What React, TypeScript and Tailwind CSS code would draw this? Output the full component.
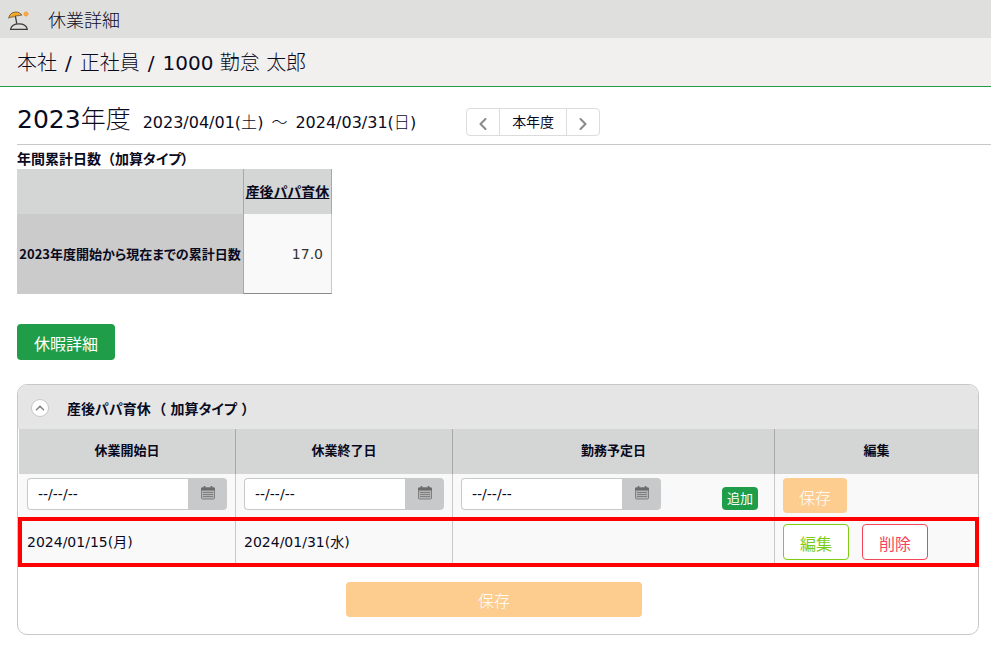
import { useState } from "react";
import { ChevronLeft, ChevronRight, ChevronUp, ChevronDown } from "lucide-react";

interface DateFieldProps {
  id: string;
  label: string;
}

function BeachIcon() {
  return (
    <svg width="22" height="22" viewBox="0 0 22 22" fill="none" aria-hidden="true">
      <path
        d="M0.7 8.2C1 4.6 4 2.2 7.3 2C10.3 1.8 12.8 3.2 13.8 5.2C12.6 5.3 11.3 5.2 10 5.8C8.4 5.5 6.6 6 5.2 7.1C3.7 6.8 2 7.2 0.7 8.2Z"
        fill="#f9a825"
        stroke="#5a5040"
        strokeWidth="0.8"
        strokeLinejoin="round"
      />
      <path d="M7.4 6.2L8.8 13.6" stroke="#3a3a3a" strokeWidth="1.3" />
      <path
        d="M2.5 19.4C3.2 16.2 6.6 13.9 11 13.9C15.4 13.9 18.6 16.2 19.4 19.4Z"
        stroke="#3a3a3a"
        strokeWidth="1.2"
        strokeLinejoin="round"
      />
      <circle cx="18" cy="4" r="2.2" fill="#f9a03a" />
      <path d="M18 1V7M15 4H21M16 2L20 6M20 2L16 6" stroke="#fbab4e" strokeWidth="1" />
    </svg>
  );
}

function CalendarIcon() {
  return (
    <svg width="14" height="14" viewBox="0 0 14 14" fill="none" aria-hidden="true">
      <rect x="0.5" y="2" width="13" height="11" rx="1" fill="#b4b4b4" stroke="#808080" />
      <rect x="0" y="1.5" width="14" height="3" rx="1" fill="#6b6b6b" />
      <path d="M3.5 0V2.5M10.5 0V2.5" stroke="#6b6b6b" strokeWidth="1.6" />
      <path d="M2 6.5H12M2 8.5H12M2 10.5H12" stroke="#808080" />
    </svg>
  );
}

function DateField({ id, label }: DateFieldProps) {
  const [value, setValue] = useState("--/--/--");

  return (
    <div className="flex h-8 w-[200px] shrink-0">
      <input
        id={id}
        type="text"
        aria-label={label}
        value={value}
        onChange={(e) => setValue(e.target.value)}
        className="min-w-0 flex-1 rounded-l border border-r-0 border-[#c8c9ca] bg-white px-2.5 text-sm outline-none"
      />
      <button
        type="button"
        aria-label={`${label}を選択`}
        className="flex w-[39px] justify-center rounded-r bg-[#c8c9ca] pt-2"
      >
        <CalendarIcon />
      </button>
    </div>
  );
}

const headClass = "h-[45px] border-r border-[#a8a8a8] bg-[#d4d6d5] text-[13px] font-bold last:border-r-0";
const cellClass = "border-r border-[#c8c8c8] px-2 last:border-r-0";

export default function App() {
  const [open, setOpen] = useState(true);

  return (
    <div className="bg-white font-['DejaVu_Sans','Noto_Sans_CJK_JP',sans-serif] text-[#0a0a1e]">
      <header>
        <div className="flex h-[38px] items-center gap-[18px] bg-[#dfdfde] px-2 pt-1">
          <BeachIcon />
          <h1 className="text-lg leading-7 font-light">休業詳細</h1>
        </div>
        <div className="flex h-[49px] items-center gap-2 border-b border-[#1f9d48] bg-[#f1f0ee] px-[17px] pt-0.5 text-xl">
          <span className="font-light">本社</span>
          <span>/</span>
          <span className="font-light">正社員</span>
          <span>/</span>
          <span>
            1000 <span className="font-light">勤怠</span> <span className="font-light">太郎</span>
          </span>
        </div>
      </header>

      <main>
        <section className="ml-[17px] flex h-[58px] items-end border-b border-[#c8c8c8] pb-2">
          <div className="flex items-baseline gap-3">
            <h2 className="text-[25px] leading-8">
              2023<span className="font-light">年度</span>
            </h2>
            <p className="flex gap-2 text-base">
              <span>
                2023/04/01(<span className="font-light">土</span>)
              </span>
              <span className="font-light">～</span>
              <span>
                2024/03/31(<span className="font-light">日</span>)
              </span>
            </p>
          </div>
          <div className="ml-[50px] flex h-7 rounded border border-[#dcdcdc] text-[#8a8a8a]">
            <button type="button" aria-label="前年度" className="flex w-8 items-center justify-center pt-1">
              <ChevronLeft size={20} strokeWidth={2.5} />
            </button>
            <button type="button" className="border-x border-[#dcdcdc] px-3 text-sm text-[#0a0a1e]">
              本年度
            </button>
            <button type="button" aria-label="翌年度" className="flex w-8 items-center justify-center pt-1">
              <ChevronRight size={20} strokeWidth={2.5} />
            </button>
          </div>
        </section>

        <section className="px-[17px] pt-1">
          <h3 className="text-sm font-bold">
            年間累計日数（加算<span className="[font-feature-settings:'palt']">タイプ）</span>
          </h3>
          <table className="border-separate border-spacing-0 text-[13px]">
            <thead>
              <tr className="h-[45px] bg-[#d4d6d5]">
                <td className="w-[226px]" />
                <th className="w-[89px] border-x border-[#a8a8a8] text-sm font-bold whitespace-nowrap [font-feature-settings:'palt']">
                  <a href="#sango" className="underline">
                    産後パパ育休
                  </a>
                </th>
              </tr>
            </thead>
            <tbody>
              <tr className="h-20">
                <th className="bg-[#cbcbcb] font-['Noto_Sans_CJK_JP',sans-serif] font-bold whitespace-nowrap [font-feature-settings:'palt']">
                  2023年度開始から現在までの累計日数
                </th>
                <td className="border-r border-b border-l border-r-[#c8c8c8] border-b-[#8a8a8a] border-l-[#a8a8a8] bg-[#f9f9f9] pr-2 text-right text-sm text-[#333]">
                  17.0
                </td>
              </tr>
            </tbody>
          </table>
          <button type="button" className="mt-[30px] h-9 rounded bg-[#1f9d48] px-[17px] pt-1.5 text-base text-white">
            休暇詳細
          </button>
        </section>

        <section className="mx-3 mt-6 mb-3 ml-[17px] rounded-[10px] border border-[#c8c8c8]">
          <div className="flex h-11 items-center gap-[18px] rounded-t-[9px] bg-[#e5e5e5] px-[13px] pt-0.5">
            <button
              type="button"
              aria-label="開閉"
              aria-expanded={open}
              onClick={() => setOpen(!open)}
              className="flex size-[18px] items-center justify-center rounded-full border border-[#c8c8c8] bg-white text-[#8a8a8a]"
            >
              {open ? <ChevronUp size={14} strokeWidth={3} /> : <ChevronDown size={14} strokeWidth={3} />}
            </button>
            <h3 className="flex gap-2 pt-0.5 text-sm font-bold [font-feature-settings:'palt']">
              <span>産後パパ育休</span>
              <span>（ 加算タイプ ）</span>
            </h3>
          </div>

          {open && (
            <div className="pl-px">
              <table className="w-full table-fixed border-separate border-spacing-0 text-sm">
                <thead>
                  <tr>
                    <th className={`${headClass} w-[217px]`}>休業開始日</th>
                    <th className={`${headClass} w-[217px]`}>休業終了日</th>
                    <th className={headClass}>勤務予定日</th>
                    <th className={`${headClass} w-[203px]`}>編集</th>
                  </tr>
                </thead>
                <tbody>
                  <tr className="h-11 bg-[#f9f9f9] align-top">
                    <td className={`${cellClass} pt-1`}>
                      <DateField id="start" label="休業開始日" />
                    </td>
                    <td className={`${cellClass} pt-1`}>
                      <DateField id="end" label="休業終了日" />
                    </td>
                    <td className={`${cellClass} pt-1`}>
                      <div className="flex items-end justify-between pr-2">
                        <DateField id="schedule" label="勤務予定日" />
                        <button
                          type="button"
                          className="h-[23px] rounded bg-[#1f9d48] px-[5px] pt-0.5 text-[13px] text-white"
                        >
                          追加
                        </button>
                      </div>
                    </td>
                    <td className={`${cellClass} pt-1`}>
                      <button
                        type="button"
                        className="h-[35px] rounded-sm bg-[#fdcc8f] px-4 pt-1.5 text-base font-light text-white"
                      >
                        保存
                      </button>
                    </td>
                  </tr>
                  {/* highlighted row */}
                  <tr className="h-12 bg-[#f9f9f9] outline-4 -outline-offset-3 outline-[#ff0000]">
                    <td className={cellClass}>2024/01/15(月)</td>
                    <td className={cellClass}>2024/01/31(水)</td>
                    <td className={cellClass} />
                    <td className={cellClass}>
                      <div className="flex gap-[13px]">
                        <button
                          type="button"
                          className="h-9 rounded border border-[#7fcc12] bg-white px-4 pt-1.5 text-base text-[#7fcc12]"
                        >
                          編集
                        </button>
                        <button
                          type="button"
                          className="h-9 rounded border border-[#f5455c] bg-white px-4 pt-1.5 text-base text-[#f5455c]"
                        >
                          削除
                        </button>
                      </div>
                    </td>
                  </tr>
                </tbody>
              </table>
            </div>
          )}

          <div className="flex justify-center pt-4 pr-2 pb-[17px]">
            <button
              type="button"
              className="h-[35px] w-[31%] rounded-sm bg-[#fdcc8f] pt-1 text-base font-light text-white"
            >
              保存
            </button>
          </div>
        </section>
      </main>
    </div>
  );
}
